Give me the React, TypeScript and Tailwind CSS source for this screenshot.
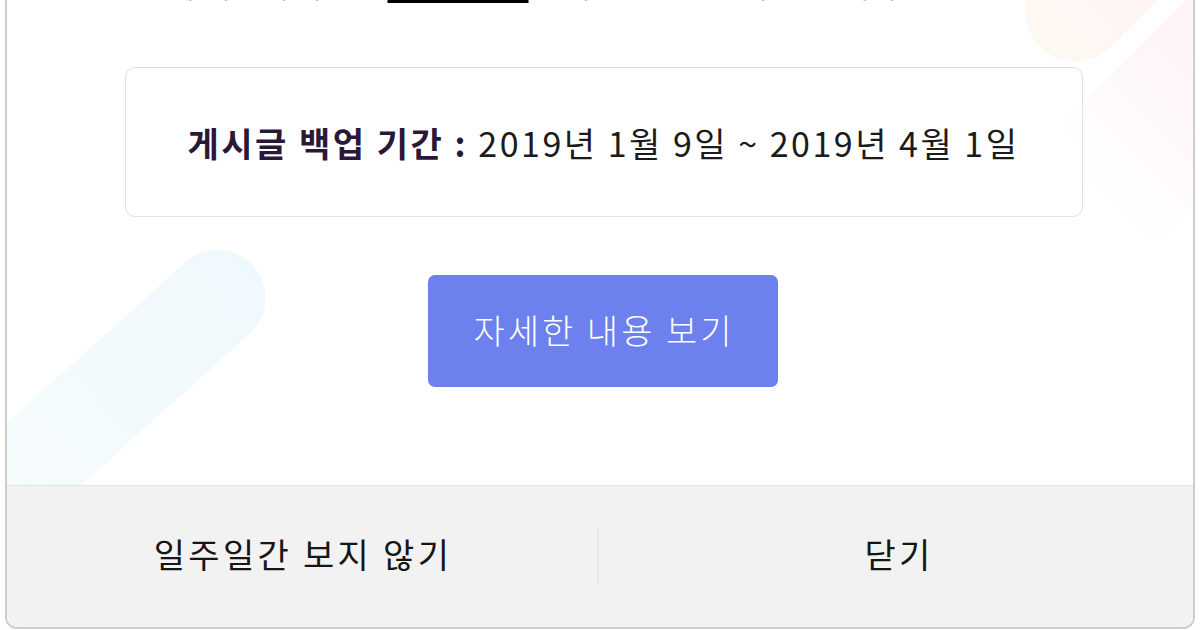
export default function App() {
  return (
    <div className="h-[630px] w-[1200px] overflow-hidden bg-white px-[5px] pb-[1px] font-['Noto_Sans_CJK_KR','Noto_Sans',sans-serif]">
      <div className="relative flex h-full flex-col overflow-hidden rounded-b-[12px] border-x-2 border-b-2 border-[#cdcdcd] bg-white">
        {/* soft decorative shapes behind the content */}
        <div className="pointer-events-none absolute left-[-85px] top-[345px] h-[96px] w-[380px] -rotate-[42deg] rounded-full bg-gradient-to-r from-[#f7fcfe] to-[#eff8fc]" />
        <div className="pointer-events-none absolute left-[960px] top-[30px] h-[150px] w-[440px] -rotate-[45deg] rounded-full bg-gradient-to-r from-transparent from-20% via-[#fef6fa] to-[#fdeef7]" />
        <div className="pointer-events-none absolute left-[995px] top-[-95px] h-[100px] w-[260px] -rotate-[45deg] rounded-full bg-gradient-to-r from-[#fef8f2] to-[#fdf1f7]" />

        <div className="relative flex flex-1 flex-col items-center">
          <p className="mt-[-33px] w-full pl-[160px] text-[31px] leading-[34px] text-black">
            이 기간에 작성된 <span className="underline underline-offset-[3px] tracking-[4px]">백업 파일</span>로 다운로드 받을 수 있습니다.
          </p>

          <div className="ml-[7px] mt-[66px] flex h-[150px] w-[958px] items-center justify-center rounded-[10px] border border-[#e2e2e2] bg-white/60">
            <p className="pt-[1px] text-[34px] tracking-[2.5px] text-[#1b1b1b]">
              <span className="font-bold text-[#2a1838]">게시글 백업 기간 :</span> 2019년 1월 9일 ~ 2019년 4월 1일
            </p>
          </div>

          <button className="ml-[5px] mt-[58px] flex h-[112px] w-[350px] items-center justify-center rounded-[7px] bg-[#6c80ee] pb-[3px] pl-[3px] text-[34px] font-light tracking-[3px] text-white">
            자세한 내용 보기
          </button>
        </div>

        <div className="relative flex h-[142px] items-center border-t border-[#e4e4e4] bg-[#f2f2f2] text-[34px] tracking-[3.3px] text-[#161616]">
          <button className="flex h-full flex-1 items-center justify-center pb-[6px] pl-[2px]">일주일간 보지 않기</button>
          <div className="h-[55px] w-[2px] bg-[#e6e6e6]" />
          <button className="flex h-full flex-1 items-center justify-center pb-[6px] pl-[6px]">닫기</button>
        </div>
      </div>
    </div>
  );
}
